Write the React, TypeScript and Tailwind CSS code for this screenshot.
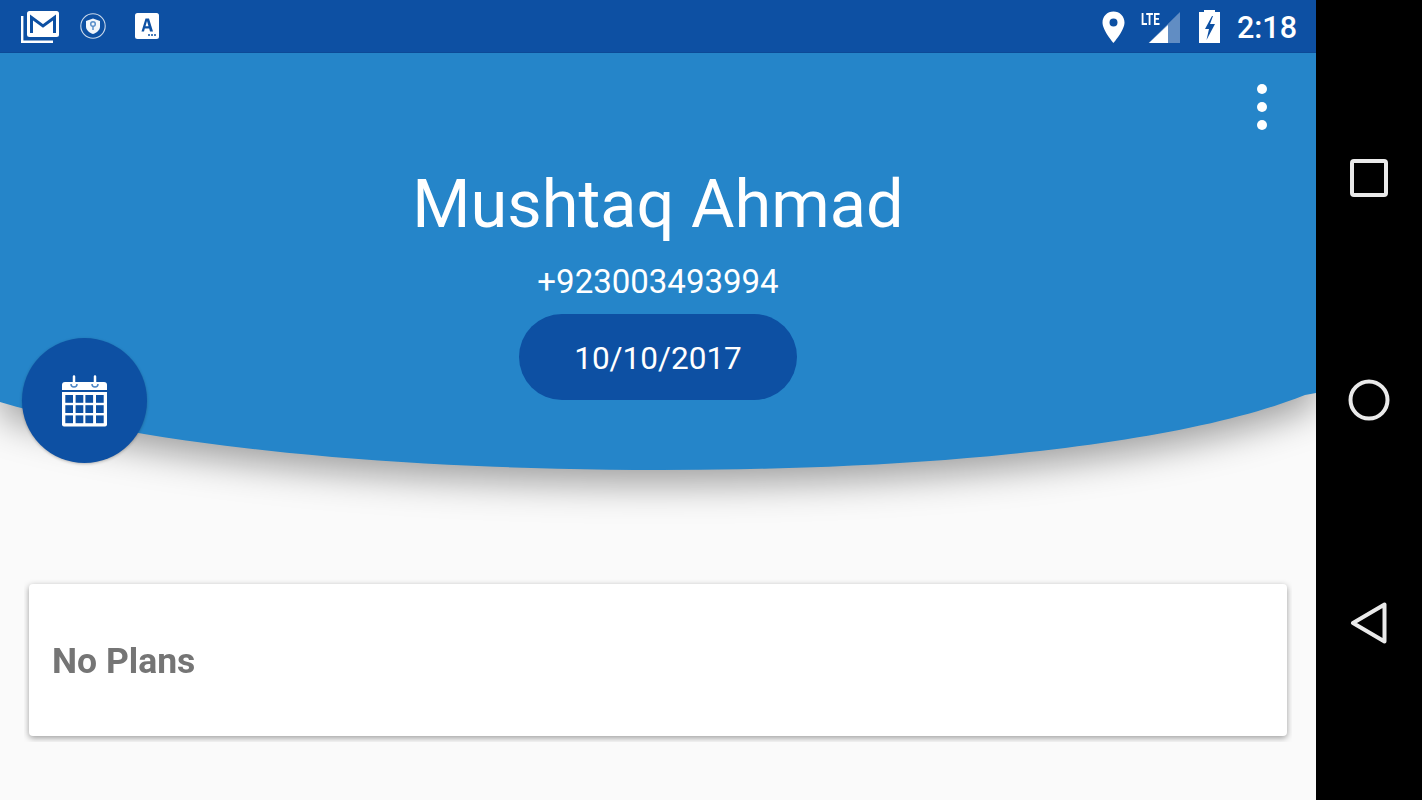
const cellXs = [3.3, 13.6, 23.4, 34];
const cellYs = [20, 30.2, 40.4];

export default function App() {
  return (
    <div className="flex w-[1422px] h-[800px] overflow-hidden bg-black font-['Roboto',sans-serif]">
      <div className="flex flex-col w-[1316px] h-full bg-[#fafafa]">
        <div className="relative z-10 flex items-center justify-between h-[53px] pl-[21px] pr-[19px] bg-[#0d50a3] border-b border-[#0c4a97]">
          <div className="flex items-center">
            <svg width="38" height="34" viewBox="0 0 38 34">
              <path d="M1.200 7v25.800H32" fill="none" stroke="#fff" strokeWidth="2.400" />
              <rect x="6" y="2" width="32" height="26" rx="2.500" fill="#fff" />
              <path d="M10.500 24V8.500L22 17 33.500 8.500V24" fill="none" stroke="#0d50a3" strokeWidth="3" />
            </svg>
            <svg width="26" height="26" viewBox="0 0 26 26" className="ml-[21px]">
              <circle cx="13" cy="13" r="12.200" fill="none" stroke="#c9d8ea" strokeWidth="1.100" />
              <path d="M13 5.500l7 2.500v5.500c0 3.500-3 6-7 7.500-4-1.500-7-4-7-7.500V8z" fill="#f2f6fb" />
              <circle cx="13" cy="11" r="2.300" fill="none" stroke="#5b8fca" strokeWidth="1.500" />
              <path d="M13 13v4" stroke="#5b8fca" strokeWidth="1.500" />
            </svg>
            <svg width="24" height="26" viewBox="0 0 24 26" className="ml-[29px]">
              <rect x="0" y="0" width="24" height="26" rx="2.500" fill="#fff" />
              <path d="M6.500 18.500L10.500 5.500h3.500l4 13h-3l-.8-3h-4.400l-.8 3zm4-5.300h3l-1.500-5.200z" fill="#0d50a3" />
              <circle cx="14" cy="22" r="1" fill="#0d50a3" />
              <circle cx="17" cy="22" r="1" fill="#0d50a3" />
              <circle cx="20" cy="22" r="1" fill="#0d50a3" />
            </svg>
          </div>
          <div className="flex items-center">
            <svg width="23" height="32" viewBox="0 0 23 32" className="mt-[2px]">
              <path fillRule="evenodd" d="M11.500 0.500C5.300 0.500 0.500 5.300 0.500 11.500 0.500 19.500 11.500 32 11.500 32S22.500 19.500 22.500 11.500C22.500 5.300 17.700 0.500 11.500 0.500zM11.500 15.500a4 4 0 1 1 0-8 4 4 0 0 1 0 8z" fill="#fff" />
            </svg>
            <div className="relative w-[41px] h-[33px] ml-[15px] mt-[2px]">
              <svg width="41" height="33" viewBox="0 0 41 33" className="absolute left-0 top-0">
                <path d="M40 1v31H8.500z" fill="#fff" fillOpacity="0.35" />
                <path d="M28 14v18H9z" fill="#fff" />
              </svg>
              <span className="absolute left-[1px] top-[-2px] text-[17px] leading-[20px] font-bold text-white scale-x-[0.68] origin-left">LTE</span>
            </div>
            <svg width="21" height="33" viewBox="0 0 21 33" className="ml-[18px] mt-[1px]">
              <path fillRule="evenodd" d="M5 0h11v2h5v31H0V2h5zM13 6L6 19h4L7.500 30 16 14h-5l3-8z" fill="#fff" />
            </svg>
            <span className="ml-[17px] mt-[3px] text-[30.500px] leading-[38px] font-medium text-white">2:18</span>
          </div>
        </div>

        <div className="relative h-[417px] flex flex-col items-center">
          <svg width="1316" height="480" viewBox="0 0 1316 480" className="absolute left-0 top-0 drop-shadow-[0_14px_18px_rgba(0,0,0,0.36)]">
            <path d="M0 0H1316V340L1305 342C1180 392 930 417 660 417C430 417 170 399 0 349Z" fill="#2585c9" />
          </svg>
          <div className="relative flex flex-col items-center w-full">
            <div className="flex flex-col self-end gap-[8px] mt-[31px] mr-[49px]">
              <div className="w-[10px] h-[10px] rounded-full bg-white" />
              <div className="w-[10px] h-[10px] rounded-full bg-white" />
              <div className="w-[10px] h-[10px] rounded-full bg-white" />
            </div>
            <div className="mt-[36px] text-[66.700px] leading-[76px] text-white">Mushtaq Ahmad</div>
            <div className="mt-[21px] text-[33px] leading-[38px] text-white">+923003493994</div>
            <div className="flex items-center justify-center mt-[13px] pt-[3px] w-[278px] h-[86px] rounded-full bg-[#0d50a3] text-[31.500px] text-white">10/10/2017</div>
          </div>
          <div className="absolute left-[22px] top-[285px] flex items-center justify-center w-[125px] h-[125px] rounded-full bg-[#0d50a3] shadow-[0_1px_3px_rgba(0,0,0,0.25)]">
            <svg width="46" height="52" viewBox="0 0 46 52">
              <path d="M3 7h39a3 3 0 0 1 3 3v5H0v-5a3 3 0 0 1 3-3z" fill="#fff" />
              <path d="M0 17h45v32.500a2 2 0 0 1-2 2H2a2 2 0 0 1-2-2z" fill="#fff" />
              {cellYs.map((y) =>
                cellXs.map((x) => <rect key={`${x}-${y}`} x={x} y={y} width="7.700" height="7.800" fill="#0d50a3" />),
              )}
              <path d="M12 1.500v7M33 1.500v7" stroke="#fff" strokeWidth="2.500" strokeLinecap="round" />
              <path d="M9 9a3 3 0 0 0 6 0M30 9a3 3 0 0 0 6 0" fill="none" stroke="#4d86c6" strokeWidth="1.500" />
            </svg>
          </div>
        </div>

        <div className="mt-[109px] mx-[24px] px-[5px] pt-[5px] pb-[6px] overflow-hidden">
          <div className="flex items-center h-[152px] pl-[23px] pt-[2px] bg-white rounded-[4px] shadow-[0_2px_6px_rgba(0,0,0,0.38)]">
            <span className="text-[35.500px] leading-[40px] font-bold text-[#757575] will-change-transform">No Plans</span>
          </div>
        </div>
      </div>

      <div className="flex flex-col items-center w-[106px] h-full pt-[159px]">
        <svg width="38" height="38" viewBox="0 0 38 38">
          <rect x="2" y="2" width="34" height="34" rx="2" fill="none" stroke="#eaeaea" strokeWidth="4" />
        </svg>
        <svg width="42" height="42" viewBox="0 0 42 42" className="mt-[182px]">
          <circle cx="21" cy="21" r="18.500" fill="none" stroke="#eaeaea" strokeWidth="4" />
        </svg>
        <svg width="38" height="42" viewBox="0 0 38 42" className="mt-[181px]">
          <path d="M34.500 2.500V39.500L3 21z" fill="none" stroke="#eaeaea" strokeWidth="4" strokeLinejoin="round" />
        </svg>
      </div>
    </div>
  );
}
